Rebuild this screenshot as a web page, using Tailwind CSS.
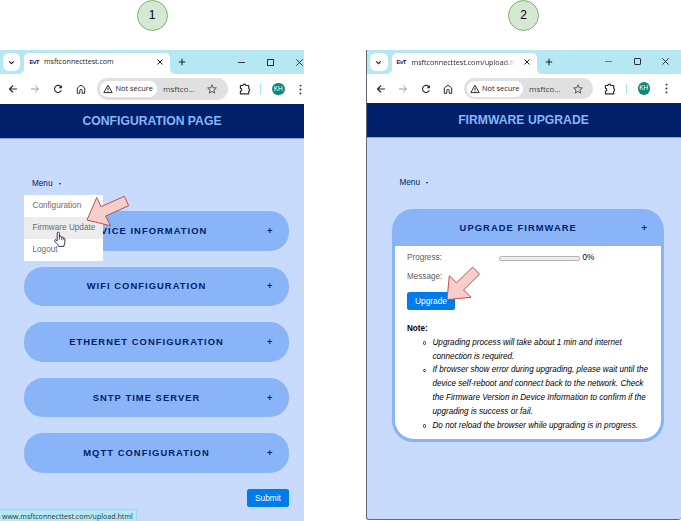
<!DOCTYPE html>
<html lang="en">
<head>
<meta charset="utf-8">
<title>Firmware upgrade steps</title>
<script src="https://cdn.jsdelivr.net/npm/@tailwindcss/browser@4"></script>
</head>
<body class="bg-white">
<svg class="hidden" xmlns="http://www.w3.org/2000/svg">
  <symbol id="back" viewBox="0 0 10 10"><path d="M9 5H1.6M5 1.5 1.5 5 5 8.5" fill="none" stroke="currentColor" stroke-width="1.15"/></symbol>
  <symbol id="fwd" viewBox="0 0 10 10"><path d="M1 5h7.4M5 1.5 8.5 5 5 8.5" fill="none" stroke="currentColor" stroke-width="1"/></symbol>
  <symbol id="reload" viewBox="0 0 10 10"><path d="M8.3 6.1A3.5 3.5 0 1 1 7.6 2.6L8.6 3.7" fill="none" stroke="currentColor" stroke-width="1.15"/><path d="M8.9 1v3.3H5.6z" fill="currentColor"/></symbol>
  <symbol id="home" viewBox="0 0 10 10"><path d="M1.3 9.3V4L5 1l3.7 3v5.3H6.2V6.6a1.2 1.2 0 0 0-2.4 0v2.7z" fill="none" stroke="currentColor" stroke-width="1"/></symbol>
  <symbol id="warn" viewBox="0 0 10 10"><path d="M5 1.2 9.2 8.6H.8z" fill="none" stroke="currentColor" stroke-width="1" stroke-linejoin="round"/><path d="M5 3.8v2.3M5 6.7v1" stroke="currentColor" stroke-width="1"/></symbol>
  <symbol id="star" viewBox="0 0 10 10"><path d="m5 .8 1.150 2.900 3.200.250-2.400 2.050.75 3.100L5 7.400 2.300 9.100l.75-3.100L.65 3.950l3.200-.25z" fill="none" stroke="currentColor" stroke-width=".85"/></symbol>
  <symbol id="puzzle" viewBox="0 0 11 11"><path d="M1.300 2.300h2.300a1.300 1.300 0 0 1 2.600 0h2.700v2.800a1.300 1.300 0 0 1 0 2.400v2.400H1.300V7.500a1.300 1.300 0 0 0 0-2.600z" fill="none" stroke="currentColor" stroke-width="1.100" stroke-linejoin="round"/></symbol>
  <symbol id="kebab" viewBox="0 0 3 11"><g fill="currentColor"><circle cx="1.5" cy="1.6" r=".95"/><circle cx="1.5" cy="5.5" r=".95"/><circle cx="1.5" cy="9.4" r=".95"/></g></symbol>
  <symbol id="chev" viewBox="0 0 6 6"><path d="M1 2l2 2 2-2" fill="none" stroke="currentColor" stroke-width="1"/></symbol>
  <symbol id="x" viewBox="0 0 8 8"><path d="M1.5 1.5l5 5M6.5 1.5l-5 5" fill="none" stroke="currentColor" stroke-width="1"/></symbol>
  <symbol id="xthin" viewBox="0 0 8 8"><path d="M1.200 1.200l5.600 5.600M6.800 1.200l-5.600 5.600" fill="none" stroke="currentColor" stroke-width=".8"/></symbol>
  <symbol id="plus" viewBox="0 0 8 8"><path d="M4 .8v6.4M.8 4h6.4" fill="none" stroke="currentColor" stroke-width="1.1"/></symbol>
  <symbol id="flareL" viewBox="0 0 5 5"><path d="M5 0v5H0A5 5 0 0 0 5 0z" fill="#fff"/></symbol>
  <symbol id="flareR" viewBox="0 0 5 5"><path d="M0 0v5h5A5 5 0 0 1 0 0z" fill="#fff"/></symbol>
</svg>

<main class="flex h-[521px] w-[681px] overflow-hidden font-['Liberation_Sans',Arial,sans-serif]">

  <!-- Step 1 -->
  <section class="flex w-[304px] shrink-0 flex-col">
    <div class="flex h-[50px] justify-center">
      <div class="flex size-[31px] items-center justify-center rounded-full border border-[#82b366] bg-[#d5e8d4] pb-px text-[12px] text-black">1</div>
    </div>

    <div class="relative flex min-h-0 flex-1 flex-col overflow-hidden bg-[#c9dbfc]">
      <!-- Tab strip -->
      <div class="flex h-6 shrink-0 bg-[#b5e8f3] pl-[3px] text-[#222]">
        <div class="mt-[3px] flex h-[18px] w-[17px] items-center justify-center rounded-[6px] bg-white"><svg class="size-[7px]"><use href="#chev"/></svg></div>
        <svg class="-ml-px size-[5px] self-end"><use href="#flareL"/></svg>
        <div class="mt-[3px] flex w-[146px] items-center rounded-t-[5px] bg-white pl-[5.5px] pb-[3px]">
          <span class="w-[10px] text-[6px] font-bold leading-none tracking-[-0.5px] text-[#12126e]">EvT</span>
          <span class="ml-[4.5px] w-[111.5px] shrink-0 whitespace-nowrap font-['Open_Sans',sans-serif] text-[7.1px] leading-none text-[#222]">msftconnecttest.com</span>
          <svg class="size-[8px] shrink-0"><use href="#x"/></svg>
        </div>
        <svg class="size-[5px] self-end"><use href="#flareR"/></svg>
        <svg class="mt-[8px] ml-[3px] size-[8px]"><use href="#plus"/></svg>
        <div class="mt-[11.5px] ml-[52px] h-px w-[7px] bg-[#333]"></div>
        <div class="mt-[9px] ml-[22px] size-[6.5px] border border-[#333]"></div>
        <svg class="mt-[7.5px] ml-[21.5px] size-[9px] shrink-0"><use href="#xthin"/></svg>
      </div>
      <!-- Toolbar -->
      <div class="flex h-[30px] shrink-0 items-center bg-white pl-[8px] text-[#2d2d2d]">
        <svg class="size-[10px]"><use href="#back"/></svg>
        <svg class="ml-[12px] size-[10px] text-[#9b9b9b]"><use href="#fwd"/></svg>
        <svg class="ml-[13px] size-[10px]"><use href="#reload"/></svg>
        <svg class="ml-[13px] size-[10px]"><use href="#home"/></svg>
        <div class="ml-[11px] flex h-[22px] w-[131px] items-center rounded-full bg-[#e0e0e0] pl-[3px] font-['Open_Sans',sans-serif] text-[7.4px] leading-none">
          <div class="flex h-4 w-[57px] items-center rounded-full bg-white pl-[3px]">
            <svg class="size-[10px]"><use href="#warn"/></svg>
            <span class="ml-[2.5px] whitespace-nowrap text-[#1c1c1c]">Not secure</span>
          </div>
          <span class="ml-[6px] w-[43px] text-[8px] text-[#444]">msftco...</span>
          <svg class="ml-[1px] size-[10px] text-[#444]"><use href="#star"/></svg>
        </div>
        <svg class="ml-[11px] size-[12px]"><use href="#puzzle"/></svg>
        <div class="ml-[9px] h-[10px] w-px bg-[#a9e3f1]"></div>
        <div class="ml-[11px] flex size-[12.5px] items-center justify-center rounded-full bg-[#0b8a7b] text-[6.5px] leading-none text-white">KH</div>
        <svg class="ml-[14.5px] h-[11px] w-[3px]"><use href="#kebab"/></svg>
      </div>
      <!-- Page header -->
      <header class="flex h-[35px] shrink-0 items-center justify-center border-b border-[#8aa3d4] bg-[#002169]">
        <h1 class="text-[12.2px] font-bold leading-none text-[#8ab4f8]">CONFIGURATION PAGE</h1>
      </header>
      <!-- Menu -->
      <nav class="relative mt-[39px] ml-6 h-[17px] w-[79px] shrink-0">
        <button class="flex items-center pl-2 text-[8.2px] leading-[11px] text-[#002169]">Menu<span class="ml-[6.5px] border-x-[1.5px] border-t-2 border-x-transparent border-t-[#002169]"></span></button>
        <ul class="absolute top-[17px] left-0 z-10 w-[79px] bg-white text-[8.2px] leading-[22px] text-[#6b6b6b]">
          <li class="pl-[8.5px]">Configuration</li>
          <li class="bg-[#ededed] pl-[8.5px]">Firmware Update</li>
          <li class="pl-[8.5px]">Logout</li>
        </ul>
      </nav>
      <!-- Sections -->
      <div class="mt-[16px] ml-6 flex w-[265px] flex-col gap-[16px] text-[9.4px] font-bold text-[#002169]">
        <div class="flex h-[39.6px] items-center rounded-[19px] bg-[#8ab4f8] pr-[16.500px]"><span class="flex-1 pl-[2px] text-center tracking-[1.050px]">DEVICE INFORMATION</span><span>+</span></div>
        <div class="flex h-[39.6px] items-center rounded-[19px] bg-[#8ab4f8] pr-[16.500px]"><span class="flex-1 pl-[2px] text-center tracking-[1.050px]">WIFI CONFIGURATION</span><span>+</span></div>
        <div class="flex h-[39.6px] items-center rounded-[19px] bg-[#8ab4f8] pr-[16.500px]"><span class="flex-1 pl-[2px] text-center tracking-[1.050px]">ETHERNET CONFIGURATION</span><span>+</span></div>
        <div class="flex h-[39.6px] items-center rounded-[19px] bg-[#8ab4f8] pr-[16.500px]"><span class="flex-1 pl-[2px] text-center tracking-[1.050px]">SNTP TIME SERVER</span><span>+</span></div>
        <div class="flex h-[39.6px] items-center rounded-[19px] bg-[#8ab4f8] pr-[16.500px]"><span class="flex-1 pl-[2px] text-center tracking-[1.050px]">MQTT CONFIGURATION</span><span>+</span></div>
        <button class="flex h-[18px] w-[42px] items-center justify-center self-end rounded-[2.5px] bg-[#007bec] text-[8.3px] font-normal text-white">Submit</button>
      </div>
      <!-- Link status bubble -->
      <div class="absolute bottom-0 left-0 h-[12px] w-[137px] rounded-tr-[2px] border-t border-r border-[#a5d5e8] bg-[#b5e8f3] pl-[2px] font-['Open_Sans',sans-serif] text-[7.1px] leading-[13px] whitespace-nowrap text-[#333]">www.msftconnecttest.com/upload.html</div>
      <!-- Pointer arrow and hand cursor -->
      <svg class="absolute top-[144px] left-[84px] z-20" width="48" height="36" viewBox="84 194 48 36"><path d="M87 220 96.7 197.5 101 206.7 124.3 196.3 128.7 205.7 105.7 216 110.3 225.7z" fill="#f8cecc" stroke="#b85450"/></svg>
      <svg class="absolute top-[181px] left-[53px] z-20" width="13" height="17" viewBox="0 0 13 17"><path d="M4.2 9.8V2.3a1.1 1.1 0 0 1 2.2 0v4.1l.2-.8a1 1 0 0 1 1.8.4v.5a1 1 0 0 1 1.8.3v.5a1 1 0 0 1 1.7.6v3.4c0 1.4-.9 2-.9 3.4v.7H5.4v-.8C4.8 13.2 2.6 12 1.6 9.8c-.3-.9.7-1.5 1.4-.9z" fill="#fff" stroke="#222a44" stroke-width=".95" stroke-linejoin="round"/><path d="M6.4 6.4v2.4M8.4 6.5v2.4M10.2 7v2" stroke="#222a44" stroke-width=".7"/></svg>
    </div>
  </section>

  <!-- Step 2 -->
  <section class="ml-[62px] flex w-[315px] shrink-0 flex-col">
    <div class="flex h-[50px] justify-center">
      <div class="flex size-[31px] items-center justify-center rounded-full border border-[#82b366] bg-[#d5e8d4] pb-px text-[12px] text-black">2</div>
    </div>

    <div class="relative flex h-[470px] flex-col overflow-hidden rounded-b-[3px] border-b border-l border-[#5f6875] bg-[#c9dbfc]">
      <!-- Tab strip -->
      <div class="flex h-6 shrink-0 bg-[#b5e8f3] pl-[3px] text-[#222]">
        <div class="mt-[3px] flex h-[18px] w-[17.5px] items-center justify-center rounded-[6px] bg-white"><svg class="size-[7px]"><use href="#chev"/></svg></div>
        <svg class="-ml-px size-[5px] self-end"><use href="#flareL"/></svg>
        <div class="mt-[3px] flex w-[145px] items-center rounded-t-[5px] bg-white pl-[5px] pb-[3px]">
          <span class="w-[10px] shrink-0 text-[6px] font-bold leading-none tracking-[-0.5px] text-[#12126e]">EvT</span>
          <span class="mr-[7px] ml-[5px] w-[104px] shrink-0 overflow-hidden bg-linear-to-r from-[#222] from-88% to-transparent bg-clip-text whitespace-nowrap font-['Open_Sans',sans-serif] text-[7.2px] leading-[10px] text-transparent">msftconnecttest.com/upload.ht</span>
          <svg class="size-[8px] shrink-0"><use href="#x"/></svg>
        </div>
        <svg class="size-[5px] self-end"><use href="#flareR"/></svg>
        <svg class="mt-[7.5px] ml-[3px] size-[8px]"><use href="#plus"/></svg>
        <div class="mt-[11px] ml-[52px] h-px w-[7px] bg-[#777]"></div>
        <div class="mt-[8px] ml-[22px] size-[7px] rounded-[1px] border border-[#333]"></div>
        <svg class="mt-[7px] ml-[20.5px] size-[9px]"><use href="#xthin"/></svg>
      </div>
      <!-- Toolbar -->
      <div class="flex h-[29px] shrink-0 items-center bg-white pl-[8.5px] text-[#2d2d2d]">
        <svg class="size-[10px]"><use href="#back"/></svg>
        <svg class="ml-[12px] size-[10px] text-[#9b9b9b]"><use href="#fwd"/></svg>
        <svg class="ml-[13px] size-[10px]"><use href="#reload"/></svg>
        <svg class="ml-[12.5px] size-[10px]"><use href="#home"/></svg>
        <div class="ml-[11px] flex h-[21.5px] w-[129px] items-center rounded-full bg-[#e0e0e0] pl-[3px] font-['Open_Sans',sans-serif] text-[7.4px] leading-none">
          <div class="flex h-4 w-[56px] items-center rounded-full bg-white pl-[3px]">
            <svg class="size-[10px]"><use href="#warn"/></svg>
            <span class="ml-[2px] whitespace-nowrap text-[#1c1c1c]">Not secure</span>
          </div>
          <span class="ml-[6px] w-[43px] text-[8px] text-[#444]">msftco...</span>
          <svg class="ml-[1px] size-[10px] text-[#444]"><use href="#star"/></svg>
        </div>
        <svg class="ml-[11px] size-[12px]"><use href="#puzzle"/></svg>
        <div class="ml-[10px] h-[10px] w-px bg-[#a9e3f1]"></div>
        <div class="ml-[10.5px] flex size-[12.5px] items-center justify-center rounded-full bg-[#0b8a7b] text-[6.5px] leading-none text-white">KH</div>
        <svg class="ml-[14.5px] h-[11px] w-[3px]"><use href="#kebab"/></svg>
      </div>
      <!-- Page header -->
      <header class="flex h-[35px] shrink-0 items-center justify-center border-b border-[#8aa3d4] bg-[#002169]">
        <h1 class="pr-px text-[12.2px] font-bold leading-none text-[#8ab4f8]">FIRMWARE UPGRADE</h1>
      </header>
      <!-- Menu -->
      <nav class="mt-[39px] ml-[32.5px] h-[32px] shrink-0">
        <button class="flex items-center text-[8.2px] leading-[11px] text-[#002169]">Menu<span class="ml-[6.5px] border-x-[1.5px] border-t-2 border-x-transparent border-t-[#002169]"></span></button>
      </nav>
      <!-- Upgrade card -->
      <article class="ml-[25px] h-[233px] w-[272px] shrink-0 overflow-hidden rounded-[21px] bg-[#8ab4f8] px-[3px] pb-[3px]">
        <div class="flex h-[37px] items-center pt-px pr-[14px] text-[9.4px] font-bold text-[#002169]"><span class="flex-1 text-center tracking-[1.05px]">UPGRADE FIRMWARE</span><span>+</span></div>
        <div class="h-[193px] rounded-b-[19px] bg-white pt-[7px] pl-[12px] text-[8.15px] text-black">
          <div class="flex h-[11px] items-center text-[#5a6068]">
            <span class="w-[92px]">Progress:</span>
            <div class="h-[5px] w-[81px] rounded-[2px] border border-[#b3b3b3] bg-[#efefef]"></div>
            <span class="ml-[2.5px] text-black">0%</span>
          </div>
          <div class="mt-[8px] flex h-[11px] items-center text-[#5a6068]">Message:</div>
          <button class="mt-[9px] flex h-[18px] w-[48px] items-center justify-center rounded-[2.5px] bg-[#007bec] text-[8.3px] text-white">Upgrade</button>
          <p class="mt-[12px] font-bold leading-[13.8px]">Note:</p>
          <ul class="pl-[25.5px] leading-[13.8px] whitespace-nowrap italic">
            <li class="relative before:absolute before:top-[5.5px] before:-left-[10px] before:size-[3.5px] before:rounded-full before:border before:border-[#333]">Upgrading process will take about 1 min and internet<br>connection is required.</li>
            <li class="relative before:absolute before:top-[5.5px] before:-left-[10px] before:size-[3.5px] before:rounded-full before:border before:border-[#333]">If browser show error during upgrading, please wait until the<br>device self-reboot and connect back to the network. Check<br>the Firmware Version in Device Information to confirm if the<br>upgrading is success or fail.</li>
            <li class="relative before:absolute before:top-[5.5px] before:-left-[10px] before:size-[3.5px] before:rounded-full before:border before:border-[#333]">Do not reload the browser while upgrading is in progress.</li>
          </ul>
        </div>
      </article>
      <!-- Pointer arrow -->
      <svg class="absolute top-[214px] left-[77px] z-20" width="40" height="40" viewBox="444 264 40 40"><path d="M447 299.7 449.3 275.8 456.5 282.8 472.7 267.2 479.6 274.2 463.5 290 471 297.3z" fill="#f8cecc" stroke="#b85450"/></svg>
    </div>
  </section>
</main>
</body>
</html>
